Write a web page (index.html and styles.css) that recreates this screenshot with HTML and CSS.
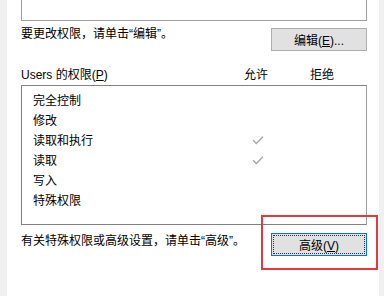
FILE: index.html
```html
<!DOCTYPE html>
<html lang="zh-CN">
<head>
    <meta charset="UTF-8">
    <title>安全</title>
    <link rel="stylesheet" href="styles.css">
</head>
<body>
    <div class="frame-left"></div>

    <main class="panel">
        <div class="group-box"></div>

        <div class="action-row">
            <span class="hint">要更改权限，请单击“编辑”。</span>
            <button class="win-button">编辑(<u>E</u>)...</button>
        </div>

        <div class="perm-header">
            <span>Users 的权限(<u>P</u>)</span>
            <span>允许</span>
            <span>拒绝</span>
        </div>

        <div class="perm-list" id="permList">
            <!-- rows filled by script -->
        </div>

        <div class="action-row bottom">
            <span class="hint">有关特殊权限或高级设置，请单击“高级”。</span>
            <div class="button-wrap">
                <button class="win-button focused">高级(<u>V</u>)</button>
                <div class="highlight"></div>
            </div>
        </div>
    </main>

    <div class="frame-right"></div>

    <script>
        // Permission rows
        const perms = [
            { name: '完全控制', allow: false },
            { name: '修改', allow: false },
            { name: '读取和执行', allow: true },
            { name: '读取', allow: true },
            { name: '写入', allow: false },
            { name: '特殊权限', allow: false }
        ];

        const check = `<svg width="12" height="10" viewBox="0 0 12 10"><path d="M1 5.2 L4.3 8.4 L11 1.8" fill="none" stroke="#a8a8a8" stroke-width="1.4"/></svg>`;

        const permList = document.getElementById('permList');
        perms.forEach(p => {
            permList.innerHTML += `
                <div class="perm-row">
                    <span>${p.name}</span>
                    <span class="check">${p.allow ? check : ''}</span>
                </div>
            `;
        });
    </script>
</body>
</html>
```

FILE: styles.css
```css
* {
    margin: 0;
    padding: 0;
    box-sizing: border-box;
}

body {
    display: flex;
    width: 387px;
    height: 296px;
    overflow: hidden;
    background: #fff;
    color: #000;
    font-family: "Liberation Sans", "Noto Sans CJK SC", sans-serif;
    font-size: 12px;
}

.frame-left {
    width: 7px;
    background: #f0f0f0;
}

.frame-right {
    width: 5px;
    margin-left: 12px;
    background: #f0f0f0;
}

.panel {
    width: 360px;
    padding-left: 14px;
}

.group-box {
    width: 346px;
    height: 21px;
    border: 1px solid #a0a0a0;
    border-top: none;
}

.action-row {
    display: flex;
    justify-content: space-between;
    align-items: flex-start;
    width: 346px;
    margin-top: 7px;
}

.action-row.bottom {
    margin-top: 8px;
}

.hint {
    line-height: 14px;
    margin-top: -1px;
}

.action-row.bottom .hint {
    margin-top: 1px;
}

.win-button {
    width: 96px;
    height: 23px;
    background: #e1e1e1;
    border: 1px solid #adadad;
    font-family: inherit;
    font-size: 12px;
    color: #000;
}

.win-button u {
    text-underline-offset: 1px;
}

.win-button.focused {
    border-color: #0078d7;
    outline: 1px dotted #333;
    outline-offset: -3px;
}

.button-wrap {
    position: relative;
}

.highlight {
    position: absolute;
    left: -10px;
    top: -18px;
    width: 117px;
    height: 55px;
    border: 2px solid #e8383d;
}

.perm-header {
    display: grid;
    grid-template-columns: 223px 66px 1fr;
    width: 346px;
    margin-top: 17px;
    line-height: 14px;
}

.perm-list {
    width: 346px;
    height: 140px;
    margin-top: 3px;
    padding: 3px 0 0 11px;
    border: 1px solid #828282;
    border-right-color: #a0a0a0;
}

.perm-row {
    display: grid;
    grid-template-columns: 219px 12px;
    align-items: center;
    height: 20px;
}

.check {
    display: flex;
    align-items: center;
    padding-top: 1px;
}
```
